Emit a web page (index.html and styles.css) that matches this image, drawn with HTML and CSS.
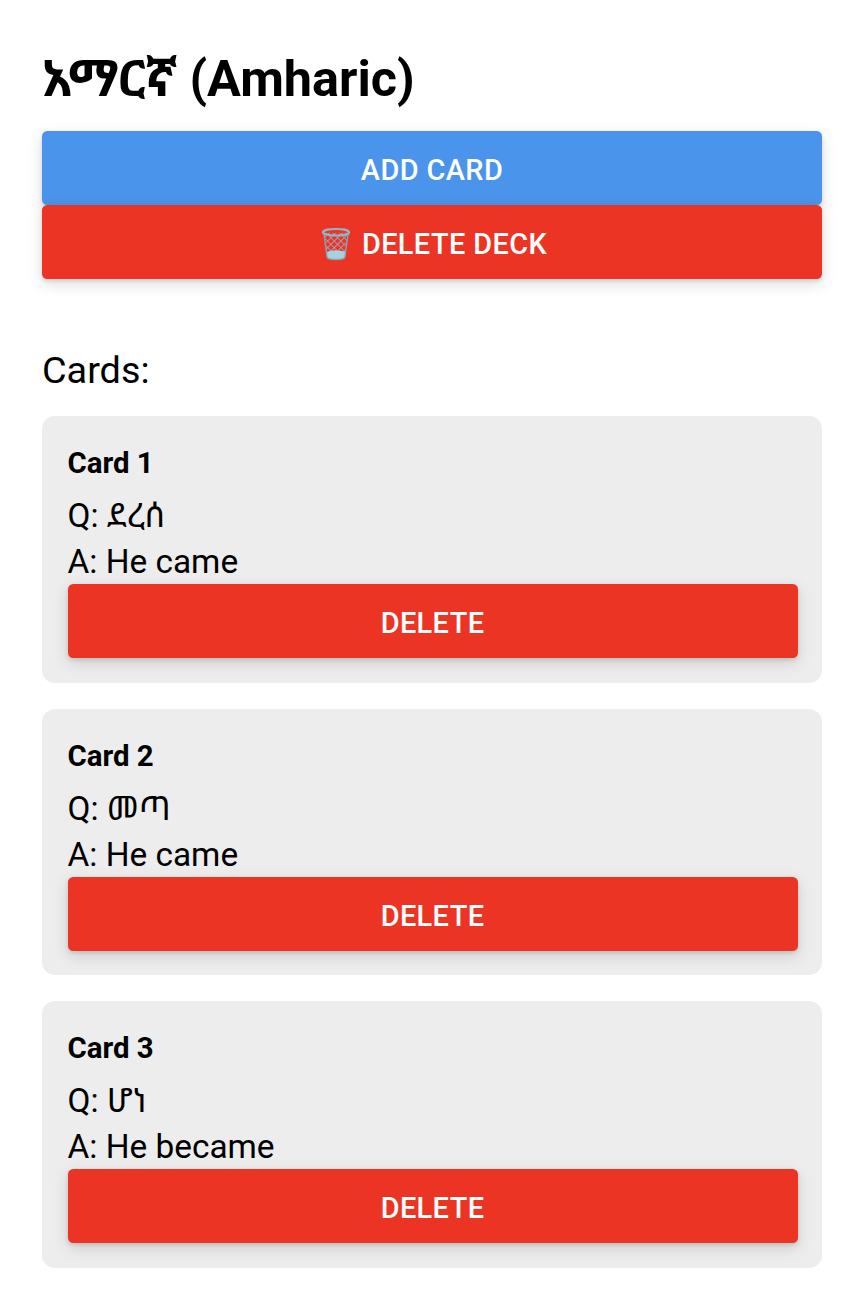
FILE: index.html
```html
<!DOCTYPE html>
<html lang="en">
<head>
  <meta charset="UTF-8">
  <title>Deck</title>
  <link rel="stylesheet" href="styles.css">
</head>
<body>
  <h1 class="deck-title">አማርኛ (Amharic)</h1>

  <button class="btn btn-blue">ADD CARD</button>
  <button class="btn btn-red">
    <svg class="trash-icon" viewBox="0 0 32 36" aria-hidden="true">
      <defs>
        <pattern id="mesh" width="5" height="5" patternUnits="userSpaceOnUse" patternTransform="rotate(45)">
          <path d="M0 0H5M0 0V5" stroke="#8db6ca" stroke-width="1.700" fill="none"/>
        </pattern>
      </defs>
      <path d="M3 6L6.500 32Q7 34.500 16 34.500T25.500 32L29 6Z" fill="url(#mesh)"/>
      <path d="M5.800 26.500Q16 23 26.200 26.500L25.500 32Q25 34.500 16 34.500T6.500 32Z" fill="#a9d0de"/>
      <path d="M3 6L6.500 32Q7 34.500 16 34.500T25.500 32L29 6" fill="none" stroke="#7aa9bf" stroke-width="1.400"/>
      <ellipse cx="16" cy="5.500" rx="14" ry="3.500" fill="none" stroke="#8fb8cb" stroke-width="2.200"/>
    </svg>
    DELETE DECK
  </button>

  <h2 class="cards-heading">Cards:</h2>

  <div class="card">
    <div class="card-name">Card 1</div>
    <div class="card-line card-q">Q: ደረሰ</div>
    <div class="card-line">A: He came</div>
    <button class="btn btn-red">DELETE</button>
  </div>

  <div class="card">
    <div class="card-name">Card 2</div>
    <div class="card-line card-q">Q: መጣ</div>
    <div class="card-line">A: He came</div>
    <button class="btn btn-red">DELETE</button>
  </div>

  <div class="card">
    <div class="card-name">Card 3</div>
    <div class="card-line card-q">Q: ሆነ</div>
    <div class="card-line">A: He became</div>
    <button class="btn btn-red">DELETE</button>
  </div>
</body>
</html>
```

FILE: styles.css
```css
body {
  margin: 0;
  padding: 50px 42px 0;
  background: #fff;
  color: #000;
  font-family: Roboto, "Noto Sans Ethiopic", sans-serif;
}

.deck-title {
  margin: 0 0 24px;
  font-size: 50.4px;
  line-height: 57px;
  font-weight: 700;
}

.btn {
  display: flex;
  align-items: center;
  justify-content: center;
  gap: 11px;
  box-sizing: border-box;
  width: 100%;
  height: 74px;
  padding: 4px 0 0;
  border: none;
  border-radius: 5.25px;
  color: #fff;
  font-family: inherit;
  font-size: 28.9px;
  font-weight: 500;
  letter-spacing: 0.4px;
  box-shadow: 0 5px 16px rgba(0,0,0,0.13), 0 2px 4px rgba(0,0,0,0.12);
}

.btn-blue {
  background: #4a94ec;
}

.btn-red {
  background: #ec3425;
}

.trash-icon {
  width: 30px;
  height: 34px;
  margin-left: 4px;
}

.cards-heading {
  margin: 69px 0 24px;
  font-size: 37.8px;
  line-height: 44px;
  font-weight: 400;
}

.card {
  padding: 27px 24.5px 24.5px 25.5px;
  margin-bottom: 26px;
  background: #ededed;
  border-radius: 13px;
}

.card-name {
  font-size: 29.4px;
  line-height: 40px;
  font-weight: 700;
}

.card-line {
  font-size: 33.4px;
  line-height: 45px;
}

.card-q {
  margin-top: 10px;
  line-height: 46px;
}
```
